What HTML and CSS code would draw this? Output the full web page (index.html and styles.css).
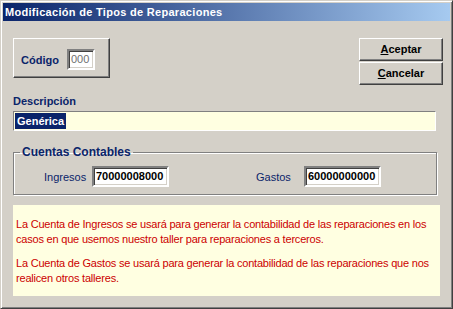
FILE: index.html
```html
<!DOCTYPE html>
<html lang="es">
<head>
  <meta charset="UTF-8" />
  <title>Modificación de Tipos de Reparaciones</title>
  <link rel="stylesheet" href="styles.css">
</head>
<body>
<div class="window">
  <div class="titlebar">Modificación de Tipos de Reparaciones</div>
  <div class="content">
    <div class="top-row">
      <div class="code-box">
        <span class="label">Código</span>
        <div class="code-input">000</div>
      </div>
      <div class="buttons">
        <div class="btn"><u>A</u>ceptar</div>
        <div class="btn"><u>C</u>ancelar</div>
      </div>
    </div>
    <div class="label desc-label">Descripción</div>
    <div class="desc-input"><span class="selected">Genérica</span></div>
    <fieldset class="accounts">
      <legend>Cuentas Contables</legend>
      <div class="account-row">
        <div class="field">
          <span class="field-label">Ingresos</span>
          <div class="num-input">70000008000</div>
        </div>
        <div class="field">
          <span class="field-label">Gastos</span>
          <div class="num-input">60000000000</div>
        </div>
      </div>
    </fieldset>
    <div class="notes">
      <p>La Cuenta de Ingresos se usará para generar la contabilidad de las reparaciones en los casos en que usemos nuestro taller para reparaciones a terceros.</p>
      <p>La Cuenta de Gastos se usará para generar la contabilidad de las reparaciones que nos realicen otros talleres.</p>
    </div>
  </div>
</div>
</body>
</html>
```

FILE: styles.css
```css
:root {
  --face: #d4d0c8;
  --shadow: #808080;
  --dark: #404040;
  --navy: #0a246a;
  --cream: #ffffe1;
}
* {
  box-sizing: border-box;
}
html, body {
  margin: 0;
  padding: 0;
  background: var(--face);
  font-family: "Liberation Sans", Arial, sans-serif;
  font-size: 11px;
}
.window {
  width: 453px;
  height: 309px;
  padding: 2px;
  background: var(--face);
  border: 1px solid;
  border-color: var(--face) var(--dark) var(--dark) var(--face);
  box-shadow: inset 1px 1px #fff, inset -1px -1px var(--shadow);
}
.titlebar {
  height: 18px;
  line-height: 18px;
  padding-left: 2px;
  color: #fff;
  font-weight: bold;
  font-size: 11px;
  letter-spacing: 0.3px;
  background: linear-gradient(to right, var(--navy), #a6caf0);
}
.content {
  padding: 17px 0 0 10px;
}
.top-row {
  width: 430px;
  display: flex;
  justify-content: space-between;
}
.label {
  color: var(--navy);
  font-weight: bold;
}
.code-box {
  width: 97px;
  height: 40px;
  display: flex;
  align-items: center;
  gap: 8px;
  padding: 3px 0 0 7px;
  border: 1px solid;
  border-color: #fff var(--dark) var(--dark) #fff;
  box-shadow: inset -1px -1px var(--shadow);
}
.code-input, .num-input, .desc-input {
  background: #fff;
  border: 2px solid;
  border-color: var(--shadow) #fff #fff var(--shadow);
  box-shadow: inset 1px 1px var(--dark), inset -1px -1px var(--face);
}
.code-input {
  width: 28px;
  height: 21px;
  line-height: 17px;
  padding-left: 2px;
  color: #707070;
}
.buttons {
  display: flex;
  flex-direction: column;
  gap: 1px;
}
.btn {
  width: 84px;
  height: 23px;
  line-height: 21px;
  text-align: center;
  font-weight: bold;
  border: 1px solid;
  border-color: #fff var(--dark) var(--dark) #fff;
  box-shadow: inset -1px -1px var(--shadow);
}
.desc-label {
  margin-top: 10px;
  line-height: 13px;
}
.desc-input {
  width: 423px;
  height: 20px;
  margin-top: 3px;
  padding: 1px 0 0 1px;
  background: var(--cream);
  border-width: 1px;
  box-shadow: none;
}
.selected {
  display: inline-block;
  height: 16px;
  line-height: 16px;
  padding: 0 2px;
  background: var(--navy);
  color: #fff;
  font-weight: bold;
}
.accounts {
  width: 424px;
  margin: 14px 0 0 0;
  padding: 7px 0 7px 30px;
  border: 1px solid var(--shadow);
  box-shadow: inset 1px 1px #fff, 1px 1px #fff;
}
.accounts legend {
  margin-left: -24px;
  padding: 0 2px;
  line-height: 14px;
  color: var(--navy);
  font-weight: bold;
  font-size: 12px;
}
.account-row {
  display: flex;
  gap: 87px;
}
.field {
  display: flex;
  align-items: center;
}
.field-label {
  width: 48px;
  color: var(--navy);
}
.num-input {
  width: 77px;
  height: 21px;
  line-height: 17px;
  padding-left: 2px;
  font-weight: bold;
  color: #000;
}
.notes {
  width: 427px;
  height: 91px;
  margin-top: 10px;
  padding: 12px 3px 0 3px;
  background: var(--cream);
  color: #cc0000;
  line-height: 15px;
  letter-spacing: -0.2px;
}
.notes p {
  margin: 0 0 9px 0;
}
```
